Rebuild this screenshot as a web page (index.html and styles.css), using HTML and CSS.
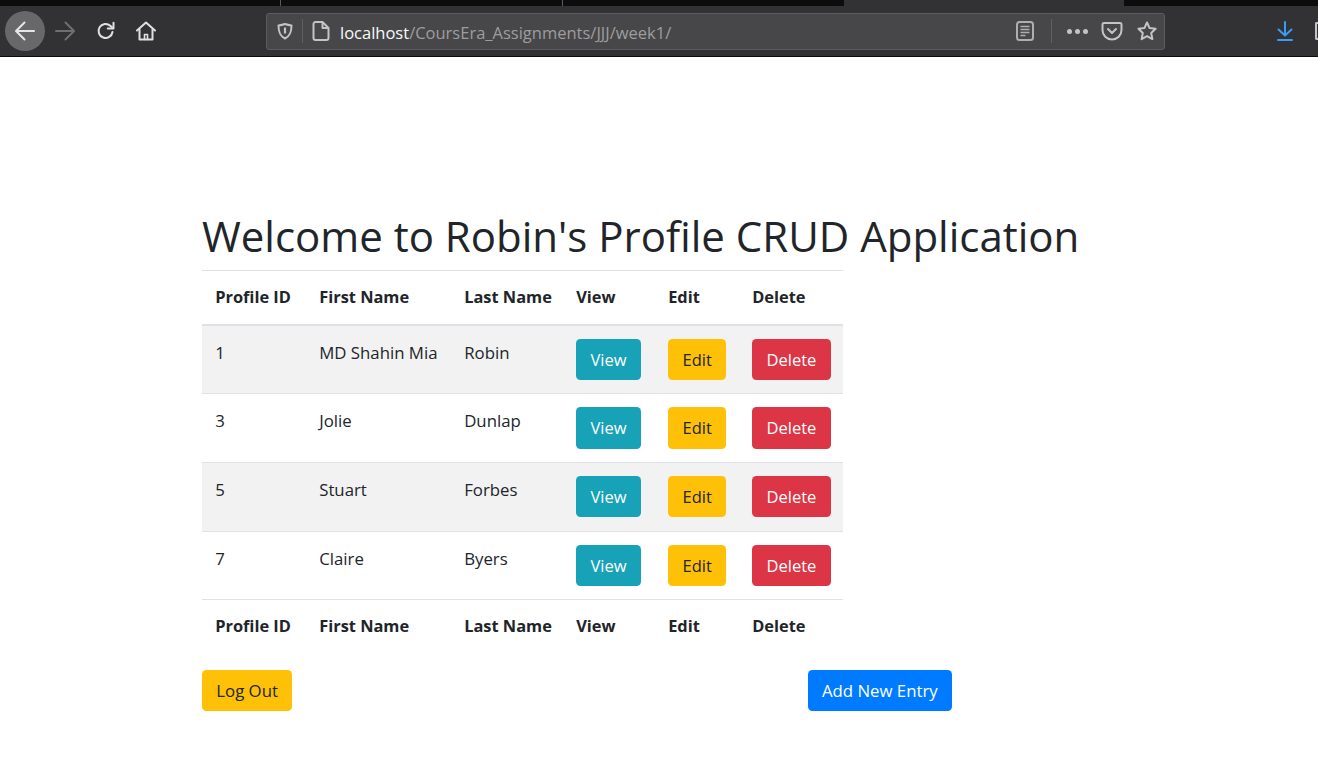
FILE: index.html
```html
<!DOCTYPE html>
<html lang="en">
<head>
    <meta charset="UTF-8">
    <meta name="viewport" content="width=device-width, initial-scale=1.0">
    <title>Welcome to Robin's Profile CRUD Application</title>
    <link rel="stylesheet" href="styles.css">
</head>
<body>
    <header class="browser">
        <div class="tab-strip">
            <div class="tab tab-first"></div>
            <div class="tab tab-second"></div>
            <div class="tab tab-third"></div>
            <div class="tab tab-active"></div>
            <div class="tab tab-last"></div>
        </div>
        <div class="toolbar">
            <div class="nav-btn back">
                <svg width="24" height="24" viewBox="0 0 24 24" fill="none" stroke="#e6e6e6" stroke-width="2" stroke-linecap="round" stroke-linejoin="round"><path d="M21 12H3.500M11.500 3.500L3 12l8.500 8.500"/></svg>
            </div>
            <div class="nav-btn forward">
                <svg width="24" height="24" viewBox="0 0 24 24" fill="none" stroke="#6f6f71" stroke-width="2" stroke-linecap="round" stroke-linejoin="round"><path d="M3 12h17.500M12.500 3.500L21 12l-8.500 8.500"/></svg>
            </div>
            <div class="nav-btn reload">
                <svg width="22" height="22" viewBox="0 0 22 22" fill="none" stroke="#e0e0e1" stroke-width="2" stroke-linecap="round" stroke-linejoin="round"><path d="M17.500 12a7 7 0 1 1-2.200-6.200L18 8.200"/><path d="M18.500 2.800v5.700h-5.700" fill="none"/></svg>
            </div>
            <div class="nav-btn home">
                <svg width="22" height="22" viewBox="0 0 22 22" fill="none" stroke="#e0e0e1" stroke-width="2" stroke-linecap="round" stroke-linejoin="round"><path d="M2 10.500L11 2.500l9 8"/><path d="M4.500 9.500V19.500h13V9.500"/><path d="M9.500 19.500v-5h3v5" stroke-width="1.600"/></svg>
            </div>
            <div class="urlbar">
                <svg class="shield" width="18" height="18" viewBox="0 0 18 18" fill="none" stroke="#c4c4c5" stroke-width="2" stroke-linejoin="round"><path d="M2.500 3.500C6 3 7.500 2.500 9 2c1.500.5 3 1 6.500 1.500 0 7-1.500 10.500-6.500 13-5-2.500-6.500-6-6.500-13z"/><path d="M9 5.500v6" stroke-width="2.200"/></svg>
                <span class="urlbar-sep"></span>
                <svg class="page-icon" width="20" height="22" viewBox="0 0 20 22" fill="none" stroke="#c4c4c5" stroke-width="2" stroke-linejoin="round"><path d="M4.500 2h7l6 6v10a2 2 0 0 1-2 2h-11a2 2 0 0 1-2-2V4a2 2 0 0 1 2-2z"/><path d="M11.500 2v6h6"/></svg>
                <div class="url"><span class="url-host">localhost</span>/CoursEra_Assignments/JJJ/week1/</div>
                <svg class="reader" width="20" height="22" viewBox="0 0 20 22" fill="none" stroke="#aeaeaf" stroke-width="2"><rect x="2" y="2" width="16" height="18" rx="2.500"/><path d="M5.500 6.500h9M5.500 9.500h9M5.500 12.500h9M5.500 15.500h5" stroke-width="1.300"/></svg>
                <span class="urlbar-sep sep-right"></span>
                <div class="dots"><i></i><i></i><i></i></div>
                <svg class="pocket" width="22" height="20" viewBox="0 0 22 20" fill="none" stroke="#c4c4c5" stroke-width="2" stroke-linecap="round" stroke-linejoin="round"><path d="M3 2h16a1.500 1.500 0 0 1 1.500 1.500V9a9.500 9.500 0 0 1-19 0V3.500A1.500 1.500 0 0 1 3 2z"/><path d="M7 8l4 4 4-4"/></svg>
                <svg class="star" width="22" height="22" viewBox="0 0 22 22" fill="none" stroke="#c4c4c5" stroke-width="2" stroke-linejoin="round"><path d="M11 2.500l2.600 5.600 6 .7-4.400 4.200 1.200 6.100L11 16.100l-5.400 3 1.200-6.100L2.400 8.800l6-.7z"/></svg>
            </div>
            <svg class="download" width="20" height="22" viewBox="0 0 20 22" fill="none" stroke="#3d9bf5" stroke-width="2" stroke-linecap="round" stroke-linejoin="round"><path d="M10 2v13M3.500 9.500L10 15.500l6.500-6M3 20h14"/></svg>
            <div class="cut-icon"></div>
        </div>
    </header>

    <main class="container">
        <h1>Welcome to Robin's Profile CRUD Application</h1>
        <table class="profiles">
            <colgroup>
                <col class="col-id">
                <col class="col-first">
                <col class="col-last">
                <col class="col-view">
                <col class="col-edit">
                <col class="col-delete">
            </colgroup>
            <thead>
                <tr>
                    <th>Profile ID</th>
                    <th>First Name</th>
                    <th>Last Name</th>
                    <th>View</th>
                    <th>Edit</th>
                    <th>Delete</th>
                </tr>
            </thead>
            <tbody>
                <tr>
                    <td>1</td>
                    <td>MD Shahin Mia</td>
                    <td>Robin</td>
                    <td><a class="btn btn-info">View</a></td>
                    <td><a class="btn btn-warning">Edit</a></td>
                    <td><a class="btn btn-danger">Delete</a></td>
                </tr>
                <tr>
                    <td>3</td>
                    <td>Jolie</td>
                    <td>Dunlap</td>
                    <td><a class="btn btn-info">View</a></td>
                    <td><a class="btn btn-warning">Edit</a></td>
                    <td><a class="btn btn-danger">Delete</a></td>
                </tr>
                <tr>
                    <td>5</td>
                    <td>Stuart</td>
                    <td>Forbes</td>
                    <td><a class="btn btn-info">View</a></td>
                    <td><a class="btn btn-warning">Edit</a></td>
                    <td><a class="btn btn-danger">Delete</a></td>
                </tr>
                <tr>
                    <td>7</td>
                    <td>Claire</td>
                    <td>Byers</td>
                    <td><a class="btn btn-info">View</a></td>
                    <td><a class="btn btn-warning">Edit</a></td>
                    <td><a class="btn btn-danger">Delete</a></td>
                </tr>
            </tbody>
            <tfoot>
                <tr>
                    <th>Profile ID</th>
                    <th>First Name</th>
                    <th>Last Name</th>
                    <th>View</th>
                    <th>Edit</th>
                    <th>Delete</th>
                </tr>
            </tfoot>
        </table>
        <div class="actions">
            <a class="btn btn-warning logout">Log Out</a>
            <a class="btn btn-primary add-new">Add New Entry</a>
        </div>
    </main>
</body>
</html>
```

FILE: styles.css
```css
/* General Reset */
* {
    margin: 0;
    padding: 0;
    box-sizing: border-box;
}

body {
    font-family: "Open Sans", "Noto Sans", sans-serif;
    font-size: 16.8px;
    line-height: 26.4px;
    color: #212529;
    background: #fff;
    overflow: hidden;
}

/* Browser chrome */
.browser {
    height: 57px;
    background: #323234;
    border-bottom: 1px solid #0c0c0d;
}

.tab-strip {
    display: flex;
    height: 6px;
    background: #0c0c0d;
}

.tab {
    height: 6px;
}

.tab-first {
    width: 281px;
    border-right: 1px solid #5a5a5c;
}

.tab-second {
    width: 282px;
    border-right: 1px solid #5a5a5c;
}

.tab-third {
    width: 281px;
}

.tab-active {
    width: 280px;
    background: #323234;
}

.tab-last {
    flex: 1;
}

.toolbar {
    display: flex;
    align-items: center;
    height: 50px;
    padding-left: 5px;
}

.nav-btn {
    display: flex;
    align-items: center;
    justify-content: center;
    flex: none;
}

.back {
    width: 40px;
    height: 40px;
    border-radius: 50%;
    background: #68686a;
}

.forward {
    width: 24px;
    margin-left: 8px;
}

.reload {
    width: 22px;
    margin-left: 18px;
}

.home {
    width: 22px;
    margin-left: 18px;
}

.urlbar {
    display: flex;
    align-items: center;
    width: 899px;
    height: 37px;
    margin-left: 109px;
    flex: none;
    background: #474749;
    border: 1px solid #5c5c5e;
    border-radius: 3px;
}

.shield {
    margin-left: 9px;
    flex: none;
}

.urlbar-sep {
    width: 1px;
    height: 24px;
    margin-left: 8px;
    background: #5f5f61;
    flex: none;
}

.page-icon {
    margin-left: 8px;
    flex: none;
}

.url {
    flex: 1;
    margin-left: 9px;
    padding-top: 5px;
    font-size: 16.5px;
    color: #9d9d9e;
    white-space: nowrap;
}

.url-host {
    color: #f9f9fa;
}

.reader {
    flex: none;
}

.sep-right {
    margin-left: 16px;
}

.dots {
    display: flex;
    gap: 3px;
    margin-left: 15px;
}

.dots i {
    width: 5px;
    height: 5px;
    border-radius: 50%;
    background: #c4c4c5;
}

.pocket {
    margin-left: 13px;
    flex: none;
}

.star {
    margin-left: 13px;
    margin-right: 6px;
    flex: none;
}

.download {
    margin-left: 110px;
    flex: none;
}

.cut-icon {
    width: 8px;
    height: 18px;
    margin-left: 20px;
    flex: none;
    border-radius: 2px 0 0 2px;
    border: 2px solid #c4c4c5;
    border-right: none;
}

/* Page content */
.container {
    width: 900px;
    margin-left: 202px;
    padding-top: 153px;
}

h1 {
    font-size: 42px;
    font-weight: 400;
    line-height: 52.8px;
    margin-bottom: 7px;
    white-space: nowrap;
}

.profiles {
    width: 641px;
    table-layout: fixed;
    border-collapse: collapse;
    margin-bottom: 17px;
}

.col-id { width: 104px; }
.col-first { width: 145px; }
.col-last { width: 112px; }
.col-view { width: 92px; }
.col-edit { width: 84px; }
.col-delete { width: 104px; }

.profiles th,
.profiles td {
    vertical-align: top;
    text-align: left;
    border-top: 1px solid #dee2e6;
    white-space: nowrap;
}

.profiles th {
    padding: 13.2px;
    font-size: 16.4px;
}

.profiles td {
    padding: 14px 13.2px 13.4px;
}

.profiles thead th {
    border-bottom: 2px solid #dee2e6;
}

.profiles tbody tr:nth-child(odd) {
    background: #f2f2f2;
}

.profiles .btn {
    margin-top: -1px;
    font-size: 16.5px;
}

.btn {
    display: inline-block;
    padding: 7.1px 14.3px 6.1px;
    line-height: 28.1px;
    border-radius: 4.4px;
    cursor: pointer;
}

.btn-info {
    background: #17a2b8;
    color: #fff;
}

.btn-warning {
    background: #ffc107;
    color: #212529;
}

.btn-danger {
    background: #dc3545;
    color: #fff;
}

.btn-primary {
    background: #007bff;
    color: #fff;
}

.actions {
    display: flex;
    justify-content: space-between;
    width: 750px;
}
```
